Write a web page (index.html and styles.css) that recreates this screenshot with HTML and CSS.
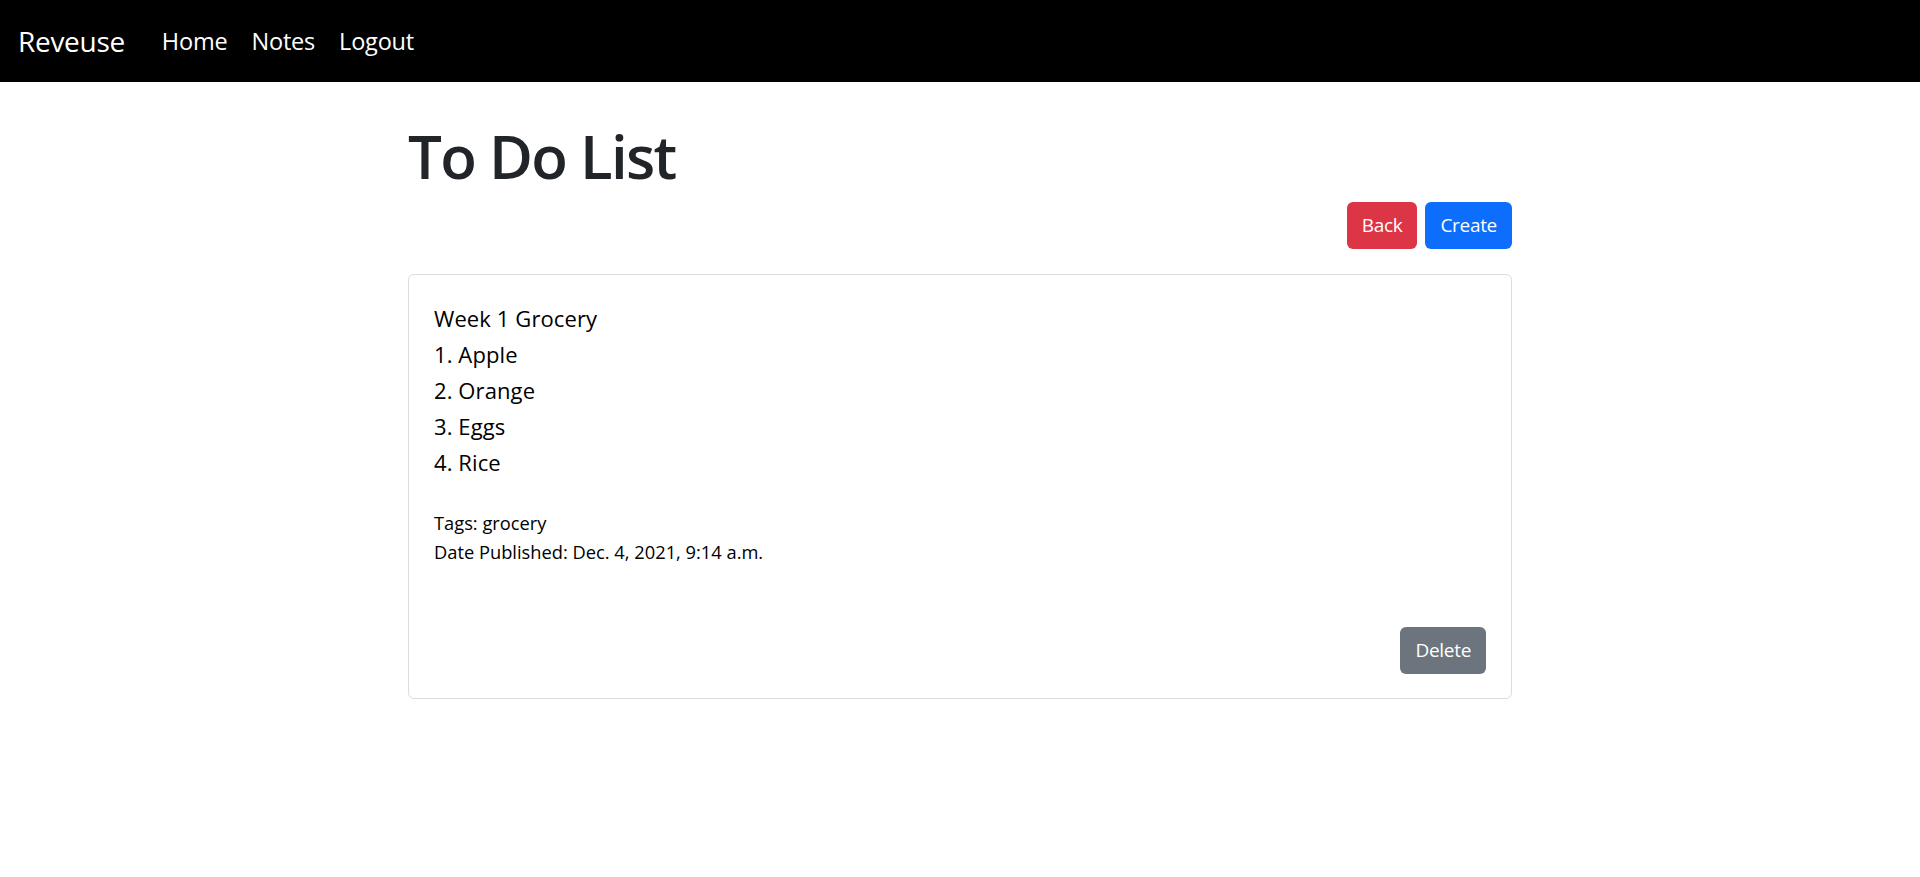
FILE: index.html
```html
<!DOCTYPE html>
<html lang="en">
<head>
<meta charset="utf-8">
<title>To Do List</title>
<link rel="stylesheet" href="styles.css">
</head>
<body>
<nav class="navbar">
  <a class="brand" href="#">Reveuse</a>
  <ul class="nav-links">
    <li><a href="#">Home</a></li>
    <li><a href="#">Notes</a></li>
    <li><a href="#">Logout</a></li>
  </ul>
</nav>
<main class="container">
  <h1 class="title">To Do List</h1>
  <div class="actions">
    <a class="btn btn-danger" href="#">Back</a>
    <a class="btn btn-primary" href="#">Create</a>
  </div>
  <div class="card">
    <div class="note-body">
      <div>Week 1 Grocery</div>
      <div>1. Apple</div>
      <div>2. Orange</div>
      <div>3. Eggs</div>
      <div>4. Rice</div>
    </div>
    <div class="meta">
      <div>Tags: grocery</div>
      <div>Date Published: Dec. 4, 2021, 9:14 a.m.</div>
    </div>
    <div class="card-actions">
      <a class="btn btn-secondary" href="#">Delete</a>
    </div>
  </div>
</main>
</body>
</html>
```

FILE: styles.css
```css
* { box-sizing: border-box; }

body {
  margin: 0;
  font-family: "Open Sans", "Noto Sans", sans-serif;
  color: #212529;
  background: #fff;
}

a { text-decoration: none; }

.navbar {
  height: 82px;
  background: #000;
  display: flex;
  align-items: center;
  padding: 0 0 0 18px;
}

.brand {
  color: #fff;
  font-size: 28px;
  line-height: 40px;
  letter-spacing: -0.3px;
  margin-right: 25px;
}

.nav-links {
  list-style: none;
  margin: 0;
  padding: 0;
  display: flex;
}

.nav-links a {
  display: block;
  color: #fff;
  font-size: 23.5px;
  line-height: 34px;
  letter-spacing: -0.2px;
  padding: 0 12px;
}

.container {
  width: 1104px;
  margin: 0 auto;
}

.title {
  margin: 38px 0 0;
  font-size: 60px;
  line-height: 72px;
  font-weight: 600;
  color: #212529;
  letter-spacing: -1.7px;
}

.actions {
  display: flex;
  justify-content: flex-end;
  gap: 8px;
  margin-top: 10px;
}

.btn {
  display: inline-block;
  font-size: 19px;
  line-height: 30px;
  padding: 8px 15px 9px;
  border-radius: 6px;
  color: #fff;
  letter-spacing: -0.3px;
}

.btn-danger { background: #dc3545; }
.btn-primary { background: #0d6efd; }
.btn-secondary { background: #6c757d; }

.card {
  margin-top: 25px;
  height: 425px;
  border: 1px solid #dcdcdc;
  border-radius: 6px;
  padding: 25px 25px 24px 25px;
  display: flex;
  flex-direction: column;
  color: #000;
}

.note-body {
  font-size: 22px;
  line-height: 36px;
  letter-spacing: 0.1px;
}

.meta {
  margin-top: 28px;
  font-size: 18.3px;
  line-height: 29px;
  letter-spacing: 0;
}

.card-actions {
  margin-top: auto;
  display: flex;
  justify-content: flex-end;
}
```
